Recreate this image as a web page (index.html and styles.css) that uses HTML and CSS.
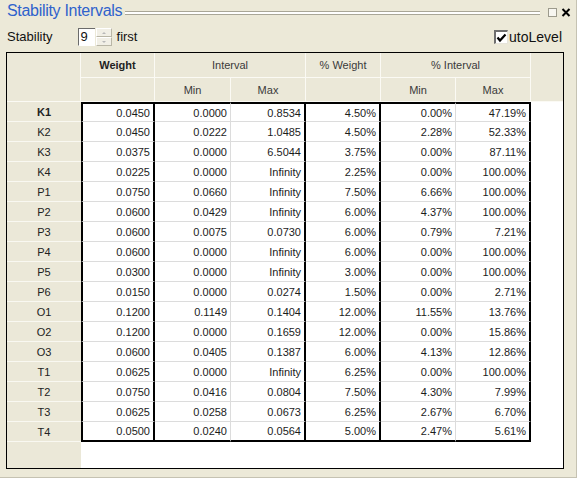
FILE: index.html
```html
<!DOCTYPE html>
<html>
<head>
<meta charset="utf-8">
<link rel="stylesheet" href="styles.css">
</head>
<body>
<div class="panel">
  <div class="titlebar">
    <span class="title">Stability Intervals</span>
    <span class="groove"></span>
    <span class="winbtns">
      <span class="restore"></span>
      <svg class="close" width="10" height="9" viewBox="0 0 10 9"><path d="M1.5 1 L8.5 8 M8.5 1 L1.5 8" stroke="#000" stroke-width="2"/></svg>
    </span>
  </div>
  <div class="toolbar">
    <span class="label">Stability</span>
    <span class="spin">
      <span class="spinbox">9</span>
      <span class="spinbtns">
        <span class="sb up"><i></i></span>
        <span class="sb down"><i></i></span>
      </span>
    </span>
    <span class="label first">first</span>
    <span class="check">
      <span class="cbox"><svg width="11" height="10" viewBox="0 0 11 10"><path d="M1.5 4.5 L4 7.5 L9.5 1.5" fill="none" stroke="#000" stroke-width="2.2"/></svg></span>
      <span class="label auto">utoLevel</span>
    </span>
  </div>
  <div class="grid">
    <div class="h corner"></div>
    <div class="h bold">Weight</div>
    <div class="h span2">Interval</div>
    <div class="h">% Weight</div>
    <div class="h span2">% Interval</div>
    <div class="h extra"></div>
    <div class="h"></div>
    <div class="h">Min</div>
    <div class="h">Max</div>
    <div class="h"></div>
    <div class="h">Min</div>
    <div class="h">Max</div>

    <div class="rh first-row bold">K1</div><div class="c w first-row">0.0450</div><div class="c first-row">0.0000</div><div class="c gx first-row">0.8534</div><div class="c gx first-row">4.50%</div><div class="c first-row">0.00%</div><div class="c gx first-row">47.19%</div><div class="blank"></div>
    <div class="rh">K2</div><div class="c w">0.0450</div><div class="c">0.0222</div><div class="c gx">1.0485</div><div class="c gx">4.50%</div><div class="c">2.28%</div><div class="c gx">52.33%</div><div class="blank"></div>
    <div class="rh">K3</div><div class="c w">0.0375</div><div class="c">0.0000</div><div class="c gx">6.5044</div><div class="c gx">3.75%</div><div class="c">0.00%</div><div class="c gx">87.11%</div><div class="blank"></div>
    <div class="rh">K4</div><div class="c w">0.0225</div><div class="c">0.0000</div><div class="c gx">Infinity</div><div class="c gx">2.25%</div><div class="c">0.00%</div><div class="c gx">100.00%</div><div class="blank"></div>
    <div class="rh">P1</div><div class="c w">0.0750</div><div class="c">0.0660</div><div class="c gx">Infinity</div><div class="c gx">7.50%</div><div class="c">6.66%</div><div class="c gx">100.00%</div><div class="blank"></div>
    <div class="rh">P2</div><div class="c w">0.0600</div><div class="c">0.0429</div><div class="c gx">Infinity</div><div class="c gx">6.00%</div><div class="c">4.37%</div><div class="c gx">100.00%</div><div class="blank"></div>
    <div class="rh">P3</div><div class="c w">0.0600</div><div class="c">0.0075</div><div class="c gx">0.0730</div><div class="c gx">6.00%</div><div class="c">0.79%</div><div class="c gx">7.21%</div><div class="blank"></div>
    <div class="rh">P4</div><div class="c w">0.0600</div><div class="c">0.0000</div><div class="c gx">Infinity</div><div class="c gx">6.00%</div><div class="c">0.00%</div><div class="c gx">100.00%</div><div class="blank"></div>
    <div class="rh">P5</div><div class="c w">0.0300</div><div class="c">0.0000</div><div class="c gx">Infinity</div><div class="c gx">3.00%</div><div class="c">0.00%</div><div class="c gx">100.00%</div><div class="blank"></div>
    <div class="rh">P6</div><div class="c w">0.0150</div><div class="c">0.0000</div><div class="c gx">0.0274</div><div class="c gx">1.50%</div><div class="c">0.00%</div><div class="c gx">2.71%</div><div class="blank"></div>
    <div class="rh">O1</div><div class="c w">0.1200</div><div class="c">0.1149</div><div class="c gx">0.1404</div><div class="c gx">12.00%</div><div class="c">11.55%</div><div class="c gx">13.76%</div><div class="blank"></div>
    <div class="rh">O2</div><div class="c w">0.1200</div><div class="c">0.0000</div><div class="c gx">0.1659</div><div class="c gx">12.00%</div><div class="c">0.00%</div><div class="c gx">15.86%</div><div class="blank"></div>
    <div class="rh">O3</div><div class="c w">0.0600</div><div class="c">0.0405</div><div class="c gx">0.1387</div><div class="c gx">6.00%</div><div class="c">4.13%</div><div class="c gx">12.86%</div><div class="blank"></div>
    <div class="rh">T1</div><div class="c w">0.0625</div><div class="c">0.0000</div><div class="c gx">Infinity</div><div class="c gx">6.25%</div><div class="c">0.00%</div><div class="c gx">100.00%</div><div class="blank"></div>
    <div class="rh">T2</div><div class="c w">0.0750</div><div class="c">0.0416</div><div class="c gx">0.0804</div><div class="c gx">7.50%</div><div class="c">4.30%</div><div class="c gx">7.99%</div><div class="blank"></div>
    <div class="rh">T3</div><div class="c w">0.0625</div><div class="c">0.0258</div><div class="c gx">0.0673</div><div class="c gx">6.25%</div><div class="c">2.67%</div><div class="c gx">6.70%</div><div class="blank"></div>
    <div class="rh last-row">T4</div><div class="c w last-row">0.0500</div><div class="c last-row">0.0240</div><div class="c gx last-row">0.0564</div><div class="c gx last-row">5.00%</div><div class="c last-row">2.47%</div><div class="c gx last-row">5.61%</div><div class="blank"></div>

    <div class="rh fill"></div>
    <div class="whitefill"></div>
  </div>
</div>
</body>
</html>
```
FILE: styles.css
```css
html, body {
  margin: 0;
  padding: 0;
  background: #ece9d8;
}
body {
  font-family: "Liberation Sans", Arial, sans-serif;
  color: #111;
}
.panel {
  width: 577px;
  height: 478px;
  box-sizing: border-box;
  border-right: 1px solid #c5c2b2;
  border-bottom: 1px solid #c5c2b2;
  display: flex;
  flex-direction: column;
}
.titlebar {
  height: 22px;
  display: flex;
  align-items: center;
  padding-left: 7px;
  padding-right: 5px;
}
.title {
  font-size: 16px;
  color: #2f62cc;
  letter-spacing: -0.3px;
  white-space: nowrap;
  line-height: 18px;
}
.groove {
  flex: 1;
  height: 2px;
  margin: 3px 8px 0 3px;
  border-top: 1px solid #a9a697;
  border-bottom: 1px solid #a9a697;
  background: #fff;
}
.winbtns {
  display: flex;
  align-items: center;
  gap: 4px;
  margin-top: 3px;
}
.restore {
  width: 7px;
  height: 7px;
  border: 1px solid #9c9a8c;
  background: #f7f6f0;
}
.close {
  display: block;
}
.toolbar {
  height: 18px;
  margin-top: 6px;
  display: flex;
  align-items: center;
  padding-left: 7px;
  padding-right: 14px;
}
.label {
  font-size: 13px;
  line-height: 16px;
  color: #111;
}
.label.auto {
  font-size: 14px;
}
.spin {
  display: flex;
  margin-left: 25px;
  height: 18px;
}
.spinbox {
  width: 17px;
  height: 18px;
  box-sizing: border-box;
  background: #fff;
  border-top: 1px solid #6b6b6b;
  border-left: 1px solid #6b6b6b;
  border-bottom: 1px solid #fff;
  font-size: 13px;
  line-height: 16px;
  padding-left: 2px;
}
.spinbtns {
  display: flex;
  flex-direction: column;
  width: 16px;
  margin-left: 1px;
}
.sb {
  flex: 1;
  box-sizing: border-box;
  background: #f1efe6;
  border-top: 1px solid #fff;
  border-left: 1px solid #fff;
  border-right: 1px solid #b9b6a6;
  border-bottom: 1px solid #b9b6a6;
  display: flex;
  align-items: center;
  justify-content: center;
}
.sb i {
  width: 0;
  height: 0;
  border-left: 2px solid transparent;
  border-right: 2px solid transparent;
}
.up i { border-bottom: 2px solid #b8b8b8; }
.down i { border-top: 2px solid #b8b8b8; }
.first {
  margin-left: 5px;
}
.check {
  margin-left: auto;
  display: flex;
  align-items: center;
  gap: 1px;
}
.cbox {
  width: 14px;
  height: 14px;
  box-sizing: border-box;
  background: #fff;
  border-top: 2px solid #6e6e6e;
  border-left: 2px solid #6e6e6e;
  border-right: 1px solid #e6e4da;
  border-bottom: 1px solid #e6e4da;
  display: flex;
  align-items: center;
  justify-content: center;
}
.cbox svg { display: block; }

.grid {
  margin: 6px 0 0 6px;
  width: 558px;
  height: 417px;
  box-sizing: border-box;
  border: 1px solid #000;
  display: grid;
  grid-template-columns: 74px 74px 76px 75px 75px 75px 75px 32px;
  grid-template-rows: 25px 24px repeat(17, 20px) 1fr;
  font-size: 11px;
}
.grid > div {
  box-sizing: border-box;
  display: flex;
  align-items: center;
  min-width: 0;
}
.h {
  background: #ebe8d8;
  border-right: 1px solid #fbfaf4;
  border-bottom: 1px solid #fbfaf4;
  justify-content: center;
  color: #3a3a3a;
}
.h.bold {
  font-weight: bold;
  color: #222;
}
.corner {
  grid-row: span 2;
}
.span2 {
  grid-column: span 2;
}
.extra {
  grid-row: span 2;
  border-right: none;
}
.rh {
  background: #ebe8d8;
  border-bottom: 1px solid #f9f8f1;
  justify-content: center;
  color: #222;
}
.rh.bold {
  font-weight: bold;
}
.c {
  background: #fff;
  justify-content: flex-end;
  padding-right: 3px;
  border-right: 1px solid #dcdcdc;
  border-bottom: 1px solid #dcdcdc;
  color: #1c1c1c;
}
.c.w {
  border-left: 2px solid #000;
  border-right: 2px solid #000;
}
.c.gx {
  border-right: 2px solid #000;
}
.first-row.c {
  border-top: 2px solid #000;
}
.last-row.c {
  border-bottom: 2px solid #000;
}
.blank {
  background: #fff;
}
.fill {
  border-bottom: none;
}
.whitefill {
  grid-column: span 7;
  background: #fff;
}
```
